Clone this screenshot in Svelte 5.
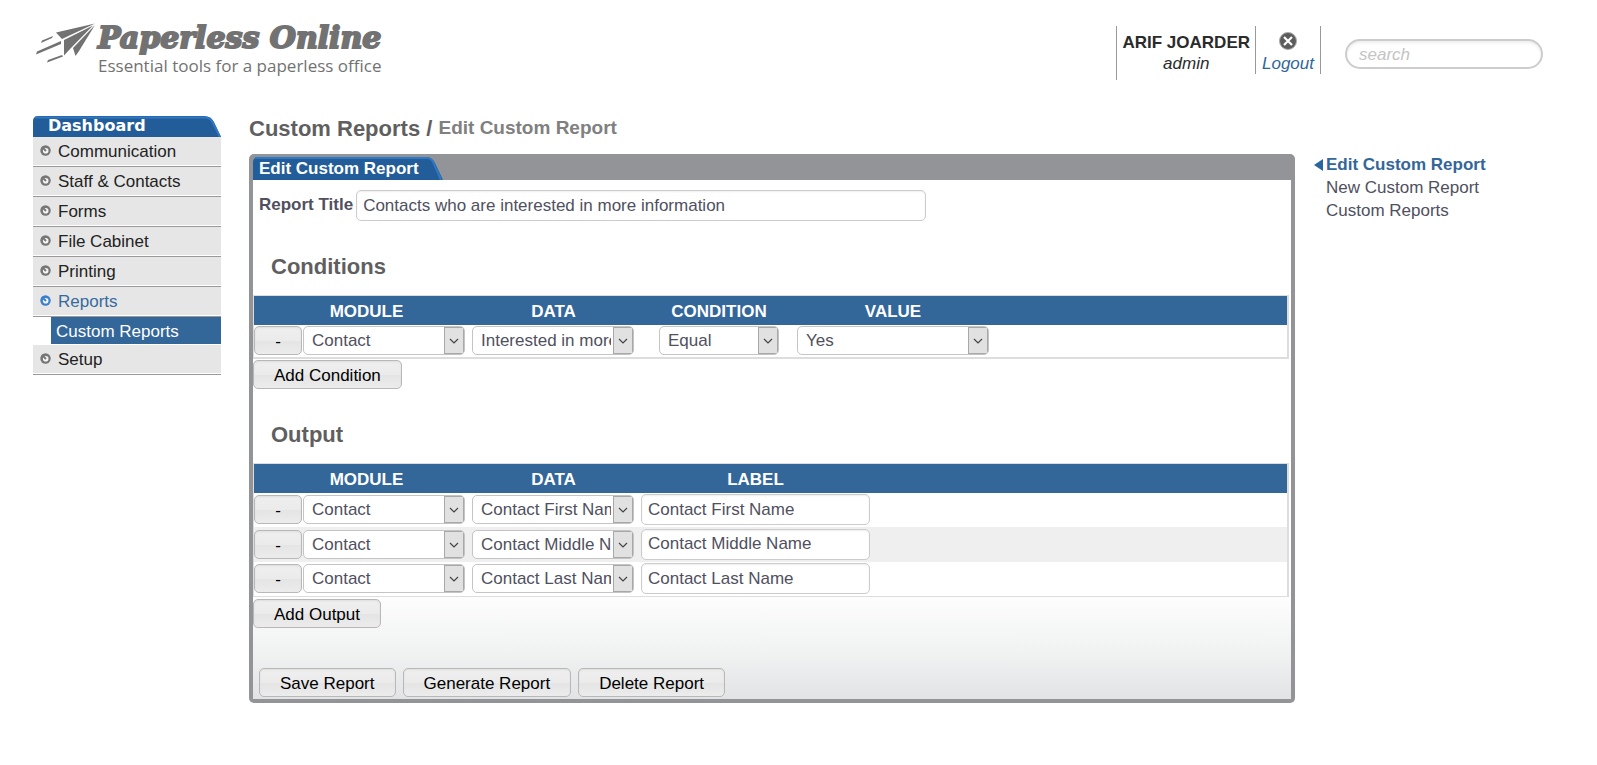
<script lang="ts">
    interface NavItem {
        label: string;
        active?: boolean;
        children?: string[];
    }

    const nav: NavItem[] = [
        { label: 'Communication' },
        { label: 'Staff & Contacts' },
        { label: 'Forms' },
        { label: 'File Cabinet' },
        { label: 'Printing' },
        { label: 'Reports', active: true, children: ['Custom Reports'] },
        { label: 'Setup' },
    ];

    const modules = ['Contact', 'Staff', 'Form'];
    const fields = ['Interested in more information', 'Contact First Name', 'Contact Middle Name', 'Contact Last Name'];

    let reportTitle = $state('Contacts who are interested in more information');

    let conditions = $state([
        { module: 'Contact', data: 'Interested in more information', condition: 'Equal', value: 'Yes' },
    ]);

    let outputs = $state([
        { module: 'Contact', data: 'Contact First Name', label: 'Contact First Name' },
        { module: 'Contact', data: 'Contact Middle Name', label: 'Contact Middle Name' },
        { module: 'Contact', data: 'Contact Last Name', label: 'Contact Last Name' },
    ]);

    function addCondition() {
        conditions.push({ module: 'Contact', data: fields[0], condition: 'Equal', value: 'Yes' });
    }

    function addOutput() {
        outputs.push({ module: 'Contact', data: fields[1], label: fields[1] });
    }
</script>

<header class="top">
    <a class="logo" href="#home">
        <svg class="plane" viewBox="0 0 60 42" aria-hidden="true">
            <g fill="#727272">
                <path d="M59 1.5 L20 10.5 L26 17 Z" />
                <path d="M57 3.5 L28 18 L28 33.5 L35 26 Z" />
                <path d="M59 3 L37 26 L39.5 34 L43 29 Z" />
                <path d="M17 14 L6 18.5 L5 21 L16 16 Z" />
                <path d="M25 19 L1 29.5 L0 32.5 L25 22 Z" />
                <path d="M26 33 L12 38 L11 40.5 L27 34.5 Z" />
            </g>
        </svg>
        <span class="logo-text">
            <span class="brand">Paperless Online</span>
            <span class="tagline">Essential tools for a paperless office</span>
        </span>
    </a>
    <div class="account">
        <div class="user">
            <strong>ARIF JOARDER</strong>
            <em>admin</em>
        </div>
        <a class="logout" href="#logout">
            <svg width="18" height="18" viewBox="0 0 18 18" aria-hidden="true">
                <circle cx="9" cy="9" r="8.5" fill="#5c5c5c" stroke="#aaa" />
                <path d="M5 5 L13 13 M13 5 L5 13" stroke="#fff" stroke-width="2.2" />
            </svg>
            <em>Logout</em>
        </a>
        <input class="search" type="search" placeholder="search" aria-label="search" />
    </div>
</header>

<div class="page">
    <nav class="sidebar">
        <a class="dashboard" href="#dashboard">Dashboard</a>
        <ul>
            {#each nav as item (item.label)}
                <li>
                    <a class="item" class:active={item.active} href="#nav">
                        <svg width="11" height="11" viewBox="0 0 11 11" aria-hidden="true">
                            <circle cx="5.5" cy="5.5" r="5.2" fill="currentColor" />
                            <circle cx="5.7" cy="5.7" r="2.8" fill="#f6f6f6" />
                            <path d="M2 2 L6 6" stroke="currentColor" stroke-width="2" />
                        </svg>
                        <span>{item.label}</span>
                    </a>
                    {#each item.children ?? [] as child}
                        <a class="sub" href="#nav">{child}</a>
                    {/each}
                </li>
            {/each}
        </ul>
    </nav>

    <main>
        <h1>Custom Reports / <small>Edit Custom Report</small></h1>
        <form class="panel" onsubmit={(e: Event) => e.preventDefault()}>
            <div class="panel-head"><span class="tab">Edit Custom Report</span></div>
            <div class="panel-body">
                <div class="title-row">
                    <label for="title">Report Title</label>
                    <input id="title" type="text" bind:value={reportTitle} />
                </div>

                <h2>Conditions</h2>
                <table class="conditions">
                    <thead>
                        <tr>
                            <th class="c-module">MODULE</th>
                            <th class="c-data">DATA</th>
                            <th class="c-cond">CONDITION</th>
                            <th class="c-value">VALUE</th>
                            <td></td>
                        </tr>
                    </thead>
                    <tbody>
                        {#each conditions as row, i}
                            <tr>
                                <td>
                                    <div class="pair">
                                        <button type="button" class="remove" onclick={() => conditions.splice(i, 1)}>-</button>
                                        <select aria-label="Module" bind:value={row.module}>
                                            {#each modules as m}<option>{m}</option>{/each}
                                        </select>
                                    </div>
                                </td>
                                <td>
                                    <select aria-label="Data" bind:value={row.data}>
                                        {#each fields as f}<option>{f}</option>{/each}
                                    </select>
                                </td>
                                <td>
                                    <select class="narrow" aria-label="Condition" bind:value={row.condition}>
                                        <option>Equal</option>
                                        <option>Not Equal</option>
                                    </select>
                                </td>
                                <td>
                                    <select class="wide" aria-label="Value" bind:value={row.value}>
                                        <option>Yes</option>
                                        <option>No</option>
                                    </select>
                                </td>
                                <td></td>
                            </tr>
                        {/each}
                    </tbody>
                </table>
                <button type="button" class="add" onclick={addCondition}>Add Condition</button>

                <h2>Output</h2>
                <table class="outputs">
                    <thead>
                        <tr>
                            <th class="c-module">MODULE</th>
                            <th class="c-data">DATA</th>
                            <th class="c-label">LABEL</th>
                            <td></td>
                        </tr>
                    </thead>
                    <tbody>
                        {#each outputs as row, i}
                            <tr>
                                <td>
                                    <div class="pair">
                                        <button type="button" class="remove" onclick={() => outputs.splice(i, 1)}>-</button>
                                        <select aria-label="Module" bind:value={row.module}>
                                            {#each modules as m}<option>{m}</option>{/each}
                                        </select>
                                    </div>
                                </td>
                                <td>
                                    <select aria-label="Data" bind:value={row.data}>
                                        {#each fields as f}<option>{f}</option>{/each}
                                    </select>
                                </td>
                                <td><input type="text" aria-label="Label" bind:value={row.label} /></td>
                                <td></td>
                            </tr>
                        {/each}
                    </tbody>
                </table>
                <button type="button" class="add" onclick={addOutput}>Add Output</button>

                <div class="actions">
                    <button type="submit">Save Report</button>
                    <button type="button">Generate Report</button>
                    <button type="button">Delete Report</button>
                </div>
            </div>
        </form>
    </main>

    <aside>
        <a class="current" href="#edit">
            <svg width="9" height="12" viewBox="0 0 9 12" aria-hidden="true"><path d="M0 6 L9 0 V12 Z" fill="#2a659f" /></svg>
            <span>Edit Custom Report</span>
        </a>
        <a href="#new">New Custom Report</a>
        <a href="#list">Custom Reports</a>
    </aside>
</div>

<style>
    :global(body) {
        background: #fff;
        color: #505060;
        font: 17px/21px "Liberation Sans", Arial, sans-serif;
    }
    a { text-decoration: none; }
    button, input, select {
        box-sizing: border-box;
        font: inherit;
        margin: 0;
    }

    .top {
        display: flex;
        justify-content: space-between;
        align-items: flex-start;
        box-sizing: border-box;
        height: 116px;
        padding: 22px 54px 0 36px;
    }
    .logo {
        display: flex;
        gap: 2px;
        color: #727272;
    }
    .plane { width: 60px; height: 42px; }
    .logo-text { display: flex; flex-direction: column; }
    .brand {
        font: italic bold 30px/31px "DejaVu Serif", serif;
        -webkit-text-stroke: 2px #727272;
        white-space: nowrap;
    }
    .tagline {
        font: 17px/26px "Open Sans", sans-serif;
        white-space: nowrap;
    }
    .account {
        display: flex;
        align-items: flex-start;
        padding-top: 4px;
    }
    .user, .logout {
        display: flex;
        flex-direction: column;
        align-items: center;
        border-left: 1px solid #999;
        padding: 6px 5px;
    }
    .user { color: #2b2b2b; }
    .logout {
        border-right: 1px solid #999;
        color: #2f6699;
        padding: 6px 6px 0;
    }
    .logout svg { margin: 0 0 3px; }
    .search {
        width: 198px;
        height: 30px;
        margin: 13px 0 0 24px;
        padding: 2px 12px 0;
        border: 2px solid #ccc;
        border-radius: 15px;
        box-shadow: inset 0 2px 3px #eee;
        outline: none;
        -webkit-appearance: none;
        appearance: none;
    }
    .search::placeholder { color: #c4c4c4; font-style: italic; }

    .page {
        display: flex;
        align-items: flex-start;
        padding: 0 0 48px 33px;
    }
    .sidebar { width: 188px; flex-shrink: 0; }
    .dashboard {
        display: block;
        height: 21px;
        padding-left: 15px;
        background: url("data:image/svg+xml,%3Csvg xmlns='http://www.w3.org/2000/svg' width='188' height='21'%3E%3Cpath d='M0 21V5Q0 0 6 0H171Q178 0 181 6L188 21Z' fill='%23225d99'/%3E%3Cpath d='M2 1.5H172Q177 1 180 7L187 21' fill='none' stroke='%232f78c4' stroke-width='2'/%3E%3C/svg%3E") no-repeat;
        color: #fff;
        font: bold 16px/19px "DejaVu Sans", Verdana, sans-serif;
    }
    .sidebar ul { list-style: none; margin: 0; padding: 0; }
    .item {
        display: flex;
        align-items: center;
        gap: 7px;
        height: 28px;
        padding-left: 7px;
        margin-bottom: 1px;
        background: #e6e6e6;
        box-shadow: 0 1px #fff, 0 2px #999;
        color: #777;
    }
    .sidebar li { padding-bottom: 1px; }
    .item svg { margin-bottom: 2px; }
    .item span { color: #222; }
    .item.active { color: #3a80cc; }
    .item.active span { color: #366a9f; }
    .sub {
        display: block;
        margin: 2px 0 0 18px;
        padding: 2px 0 0 5px;
        background: #336699;
        color: #fff;
        line-height: 25px;
    }

    main { flex: 1; margin-left: 28px; }
    h1 {
        margin: 0;
        height: 38px;
        color: #5f5f5f;
        font-size: 22px;
        line-height: 23px;
    }
    h1 small {
        color: #808080;
        font-size: 19px;
        vertical-align: 2px;
    }
    .panel {
        border: 4px solid #939498;
        border-top: 0;
        border-radius: 5px;
        background: #939498;
    }
    .panel-head { padding-top: 3px; }
    .tab {
        display: block;
        width: 184px;
        height: 23px;
        padding-left: 6px;
        background: url("data:image/svg+xml,%3Csvg xmlns='http://www.w3.org/2000/svg' width='190' height='23'%3E%3Cpath d='M0 23V5Q0 0 6 0H173Q179 0 182 6L190 23Z' fill='%23225d99'/%3E%3Cpath d='M2 1H174Q179 1 181 7L188 23' fill='none' stroke='%232f78c4' stroke-width='2'/%3E%3C/svg%3E") no-repeat;
        color: #fff;
        font-weight: bold;
        line-height: 23px;
    }
    .panel-body {
        padding-top: 10px;
        background: #fff linear-gradient(#fff, #f0f1f1 60%, #e2e3e5) no-repeat bottom / 100% 110px;
        padding-bottom: 2px;
    }
    .title-row {
        display: flex;
        gap: 3px;
        padding-left: 6px;
    }
    .title-row label { font-weight: bold; line-height: 29px; }
    .title-row input { width: 570px; }
    input[type="text"] {
        height: 31px;
        padding: 0 6px;
        border: 1px solid #ccc;
        border-radius: 5px;
        background: #fff;
        box-shadow: inset 0 1px 2px #eee;
        color: #505060;
    }
    h2 {
        margin: 33px 0 16px 18px;
        color: #5f5f5f;
        font-size: 22px;
        line-height: 25px;
    }

    table {
        width: calc(100% - 2px);
        border: 1px solid #ddd;
        border-right-width: 2px;
        border-spacing: 0;
        table-layout: fixed;
        background: #fff;
    }
    .conditions { border-bottom-width: 2px; }
    th, td { padding: 0; text-align: left; }
    thead th, thead td {
        height: 28px;
        padding-top: 1px;
        background: #336699;
        color: #fff;
        text-align: center;
    }
    .c-module { width: 211px; padding-left: 7px; }
    .c-data { width: 163px; padding-right: 6px; }
    .c-cond { width: 156px; }
    .c-value { width: 192px; }
    .c-label { width: 229px; }
    tbody td { padding-bottom: 1px; }
    .conditions tbody td { height: 31px; }
    .outputs tbody td { height: 33px; }
    .outputs tbody tr:nth-child(even) { background: #efefef; }
    .outputs tbody tr:nth-child(even) td { height: 34px; }
    .pair { display: flex; gap: 1px; }
    .outputs input { display: block; width: 229px; }
    select {
        display: block;
        width: 162px;
        height: 29px;
        padding: 0 22px 0 8px;
        border: 1px solid #c4c4c4;
        border-radius: 5px;
        background: #fff url("data:image/svg+xml,%3Csvg xmlns='http://www.w3.org/2000/svg' width='20' height='27'%3E%3Crect x='.5' y='.5' width='19' height='26' fill='%23e1e1e1' stroke='%23a8a8a8'/%3E%3Cpath d='M6 12L10 16L14 12' fill='none' stroke='%23444' stroke-width='1.2'/%3E%3C/svg%3E") no-repeat right center;
        color: #505060;
        text-overflow: clip;
        -webkit-appearance: none;
        appearance: none;
    }
    .narrow { width: 120px; margin: 0 auto; }
    .wide { width: 192px; }

    button {
        height: 29px;
        padding: 2px 20px 0;
        border: 1px solid #b8b8b8;
        border-radius: 5px;
        background: linear-gradient(#efefef, #ebebeb 50%, #e4e4e4 51%, #ececec);
        box-shadow: inset 0 1px 2px #ddd;
        color: #000;
        cursor: pointer;
    }
    .remove { width: 48px; padding: 2px 0 0; }
    .add { display: block; margin-top: 2px; }
    .conditions + .add { margin-top: 1px; }
    .actions {
        display: flex;
        gap: 7px;
        padding: 40px 6px 0;
    }

    aside {
        display: flex;
        flex-direction: column;
        flex-shrink: 0;
        box-sizing: border-box;
        width: 302px;
        padding: 37px 0 0 31px;
        line-height: 23px;
    }
    aside a { color: #505060; }
    aside .current {
        display: flex;
        align-items: center;
        gap: 3px;
        margin-left: -12px;
        color: #336699;
        font-weight: bold;
    }
</style>
